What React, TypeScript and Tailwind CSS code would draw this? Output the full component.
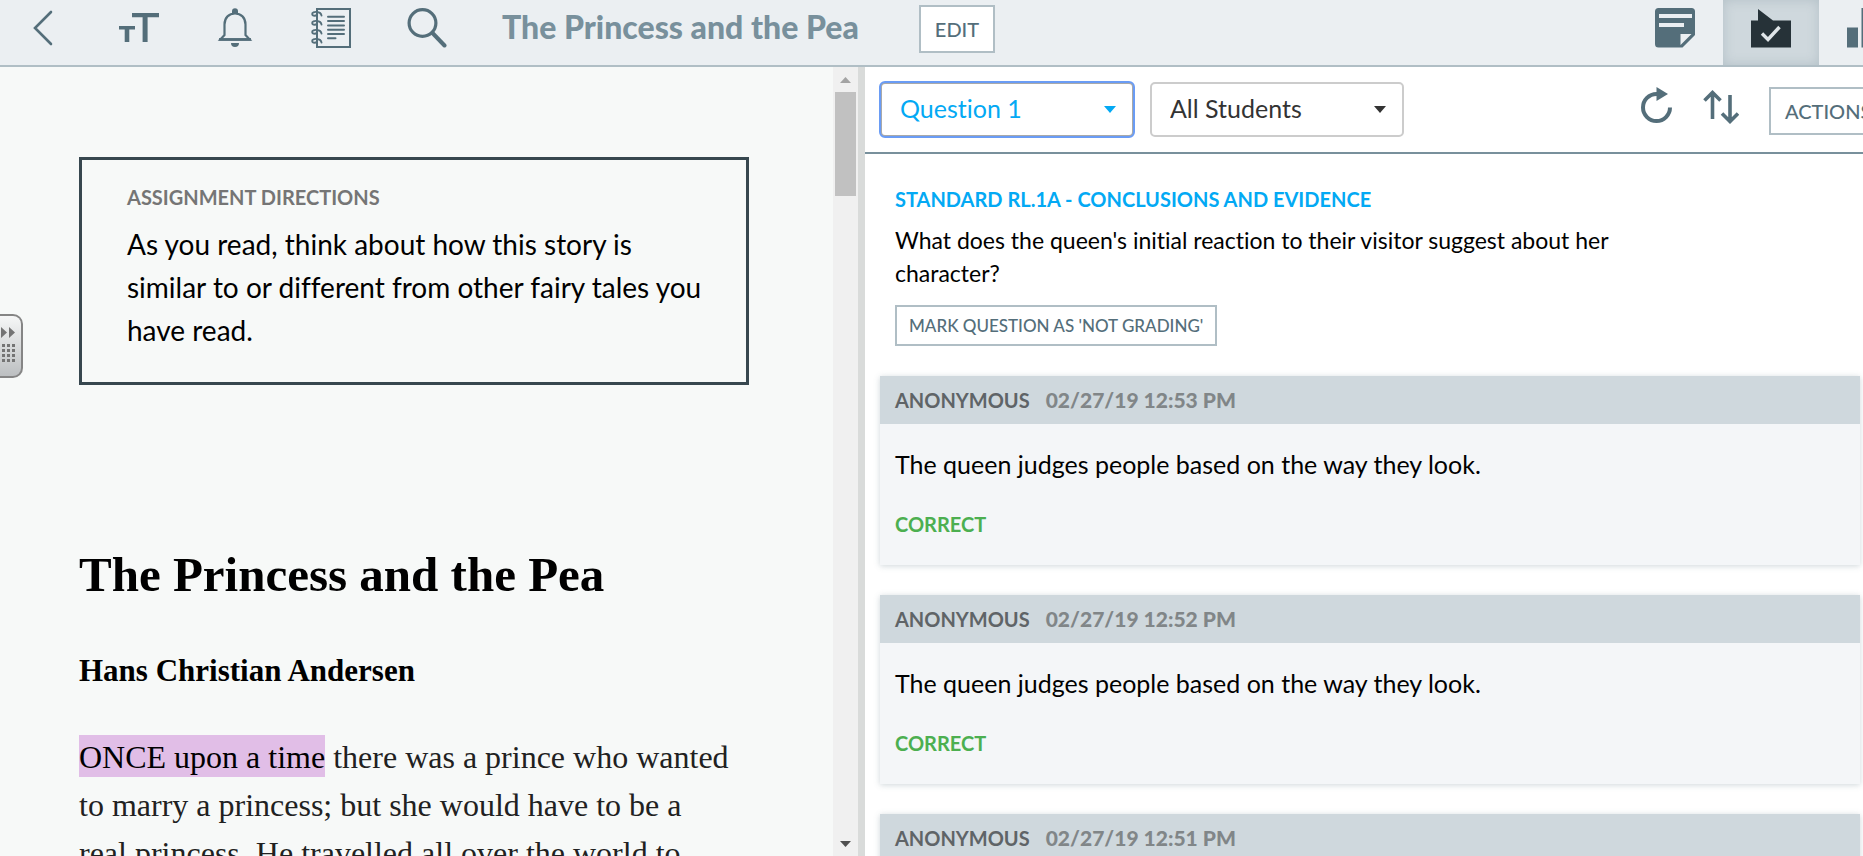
import React from "react";

const responses = [
  { id: 1, name: "ANONYMOUS", date: "02/27/19 12:53 PM", answer: "The queen judges people based on the way they look.", status: "CORRECT" },
  { id: 2, name: "ANONYMOUS", date: "02/27/19 12:52 PM", answer: "The queen judges people based on the way they look.", status: "CORRECT" },
  { id: 3, name: "ANONYMOUS", date: "02/27/19 12:51 PM", answer: "The queen judges people based on the way they look.", status: "CORRECT" },
];

function IconButton({ label, active = false, children }: { label: string; active?: boolean; children: React.ReactNode }) {
  return (
    <button
      type="button"
      aria-label={label}
      className={
        active
          ? "flex h-full w-24 shrink-0 items-center justify-center bg-[#cfd8dd] pb-[9px] text-[#263238] shadow-[inset_0_0_12px_rgba(84,110,122,0.22)]"
          : "flex h-full w-24 shrink-0 items-center justify-center pb-[9px] text-[#546e7a]"
      }
    >
      {children}
    </button>
  );
}

function BackIcon() {
  return (
    <svg width="40" height="40" viewBox="0 0 40 40" fill="none" stroke="currentColor" strokeWidth="2.6">
      <path d="M28 4 12 20l16 16" strokeLinecap="round" />
    </svg>
  );
}

function TextSizeIcon() {
  return (
    <svg width="40" height="40" viewBox="0 0 40 40" fill="currentColor">
      <path d="M13 5h27v4.2H28.6V34h-5V9.200H13z" />
      <path d="M0 18h16v3.600h-5.700V34H5.700V21.600H0z" />
    </svg>
  );
}

function BellIcon() {
  return (
    <svg width="40" height="40" viewBox="0 0 40 40" fill="none" stroke="currentColor" strokeWidth="2.200">
      <path d="M9.500 27V16.500C9.500 9.500 14 5.500 20 5.500s10.500 4 10.500 11V27l4.300 4.600H5.200z" />
      <path d="M4 31.400h32" strokeWidth="2.600" />
      <path d="M17 5V3.200a3 3 0 0 1 6 0V5l1.200 1h-8.400zM16 35h8a4 4 0 0 1-8 0z" fill="currentColor" stroke="none" />
    </svg>
  );
}

function NotebookIcon() {
  return (
    <svg width="40" height="40" viewBox="0 0 40 40" fill="none" stroke="currentColor" strokeWidth="2">
      <path d="M6 1h33v38H6z" />
      <path d="M17 8.700h16M17 13h16M17 17.400h16M17 21.700h16M17 26h16M17 30.300h7.500" strokeLinecap="round" />
      {[6, 15, 24, 33].map((y) => (
        <path key={y} d={`M10.500 ${y + 1.500}C10 ${y - 3} 1 ${y - 3} 1.200 ${y}c.2 2.500 4.800 2.300 4.800 0`} strokeWidth="1.900" strokeLinecap="round" />
      ))}
    </svg>
  );
}

function SearchIcon() {
  return (
    <svg width="40" height="40" viewBox="0 0 40 40" fill="none" stroke="currentColor">
      <circle cx="15.500" cy="15" r="13.400" strokeWidth="3.200" />
      <path d="m25.500 25 12 12.500" strokeWidth="4" strokeLinecap="round" />
    </svg>
  );
}

function NoteIcon() {
  return (
    <svg width="40" height="40" viewBox="0 0 40 40" fill="currentColor">
      <path fillRule="evenodd" d="M3.500 0h33A3.500 3.500 0 0 1 40 3.500V27L27.500 39.500h-24A3.500 3.500 0 0 1 0 36V3.500A3.500 3.500 0 0 1 3.500 0zM4 6v4h33V6zm0 9v4h25v-4zm21.500 11v11L36.500 26z" />
    </svg>
  );
}

function GradingIcon() {
  return (
    <svg width="40" height="40" viewBox="0 0 40 40">
      <path d="M0 12.500h7V1l15 11.500h18V39.500H0z" fill="currentColor" />
      <path d="m11 25.500 6 6L28.500 19" fill="none" stroke="#dfe5e8" strokeWidth="3.400" />
    </svg>
  );
}

function ChartIcon() {
  return (
    <svg width="40" height="40" viewBox="0 0 40 40" fill="currentColor">
      <path d="M0 19.500h11V39.500H0zM14.500 0h11v39.500h-11zM29 11h11v28.500H29z" />
    </svg>
  );
}

function RefreshIcon() {
  return (
    <svg width="32" height="36" viewBox="0 0 32 36" fill="none">
      <path d="M29 20.500A13.500 13.500 0 1 1 15.500 7H18" stroke="currentColor" strokeWidth="4" />
      <path d="M15.500 0 27 7 15.500 14z" fill="currentColor" />
    </svg>
  );
}

function SortIcon() {
  return (
    <svg width="36" height="38" viewBox="0 -2 36 38" fill="none" stroke="currentColor" strokeWidth="3.600">
      <path d="M9.500 30V4M1.500 11.500l8-8 8 8M27 6v26M19 24.500l8 8 8-8" />
    </svg>
  );
}

function FilterSelect({ label, value, focused = false }: { label: string; value: string; focused?: boolean }) {
  return (
    <label className={focused ? "relative block text-[#03a9f4]" : "relative block text-[#333333]"}>
      <span className="sr-only">{label}</span>
      <select
        defaultValue={value}
        className={
          focused
            ? "h-[55px] w-[254px] appearance-none rounded-[5px] border-2 border-[#a9a9a9] bg-white pb-[2px] pl-[18px] text-[25px] outline-2 -outline-offset-1 outline-[#6a9cf5]"
            : "h-[55px] w-[254px] appearance-none rounded-[5px] border-2 border-[#cccccc] bg-white pb-[2px] pl-[18px] text-[25px]"
        }
      >
        <option>{value}</option>
      </select>
      <svg className="pointer-events-none absolute top-6 right-[18px]" width="12" height="7" viewBox="0 0 12 7" fill="currentColor">
        <path d="M0 0h12L6 7z" />
      </svg>
    </label>
  );
}

function ResponseCard({ name, date, answer, status }: { name: string; date: string; answer: string; status: string }) {
  return (
    <article className="bg-[#f4f6f8] shadow-[0_1px_6px_rgba(84,110,122,0.28)]">
      <header className="flex h-12 items-center gap-4 bg-[#cfd8dd] px-[15px] font-bold">
        <span className="text-xl text-[#5f6467]">{name}</span>
        <time className="text-[21px] font-black text-[#818688]">{date}</time>
      </header>
      <div className="px-[15px] pt-[22px] pb-6">
        <p className="text-[25px] leading-9 text-black">{answer}</p>
        <p className="mt-[26px] text-xl leading-[33px] font-bold text-[#4caf50]">{status}</p>
      </div>
    </article>
  );
}

function SideHandle() {
  return (
    <button
      type="button"
      aria-label="Open tools"
      className="absolute top-[314px] left-0 flex h-16 w-[23px] items-center rounded-r-[10px] border-2 border-l-0 border-[#858585] bg-linear-to-b from-[#f6f7f7] to-[#bcbfc1]"
    >
      <svg width="17" height="40" viewBox="0 0 17 40" fill="#747474">
        <path d="M1 1v11l6-5.500zM9 1v11l6-5.500z" />
        {[18, 23, 28, 33].map((y) => (
          <path key={y} d={`M2 ${y}h3v3h-3zM7 ${y}h3v3h-3zM12 ${y}h3v3h-3z`} />
        ))}
      </svg>
    </button>
  );
}

export default function App() {
  return (
    <div className="relative flex h-screen flex-col overflow-hidden bg-white font-['Lato',sans-serif] [font-variant-ligatures:no-common-ligatures]">
      <header className="flex h-[67px] shrink-0 items-center border-b-2 border-[#b0bec5] bg-[#ebeff2]">
        <nav className="-ml-[5px] flex h-full shrink-0" aria-label="Reading tools">
          <IconButton label="Back"><BackIcon /></IconButton>
          <IconButton label="Text size"><TextSizeIcon /></IconButton>
          <IconButton label="Notifications"><BellIcon /></IconButton>
          <IconButton label="Notebook"><NotebookIcon /></IconButton>
          <IconButton label="Search"><SearchIcon /></IconButton>
        </nav>
        <div className="ml-[27px] flex items-center gap-[60px] pb-2">
          <h1 className="pb-1 text-[32px] leading-10 font-black whitespace-nowrap text-[#78909c]">The Princess and the Pea</h1>
          <button type="button" className="h-12 border-2 border-[#b0bec5] bg-white px-[14px] text-xl font-medium text-[#546e7a]">EDIT</button>
        </div>
        <nav className="-mr-[52px] ml-auto flex h-full shrink-0" aria-label="Panels">
          <IconButton label="Notes"><NoteIcon /></IconButton>
          <IconButton label="Grading" active><GradingIcon /></IconButton>
          <IconButton label="Reports"><ChartIcon /></IconButton>
        </nav>
      </header>

      <div className="flex min-h-0 flex-1">
        <main className="flex w-[calc(46%+1px)] shrink-0 bg-[#f7f9f8]">
          <div className="min-w-0 flex-1 overflow-hidden pt-[90px] pr-[84px] pl-[79px]">
            <section className="border-3 border-[#37474f] pt-[23px] pr-9 pb-[30px] pl-[45px]">
              <h2 className="text-xl leading-7 font-bold text-[#757575]">ASSIGNMENT DIRECTIONS</h2>
              <p className="mt-3 text-[28px] leading-[43px] text-black">
                As you read, think about how this story is similar to or different from other fairy tales you have read.
              </p>
            </section>
            <article className="pt-[158px] font-['Liberation_Serif',serif] text-black">
              <h2 className="text-[49px] leading-[64px] font-bold">The Princess and the Pea</h2>
              <h3 className="mt-[43px] text-[31px] leading-[42px] font-bold">Hans Christian Andersen</h3>
              <p className="mt-[41px] pr-4 text-[32px] leading-[48px] text-[#212121]">
                <mark className="bg-[#e1bee7] pt-1 pb-[2px] text-black">ONCE upon a time</mark> there was a prince who wanted to marry a princess; but she would have to be a real princess. He travelled all over the world to find one.
              </p>
            </article>
          </div>
          <div className="flex w-[25px] shrink-0 flex-col items-center bg-[#f0f0f0]" aria-hidden="true">
            <svg width="25" height="25" viewBox="0 0 25 25" fill="#a3a3a3"><path d="m12.500 10 5.500 6H7z" /></svg>
            <div className="h-[104px] w-[21px] bg-[#c1c1c1]" />
            <svg className="mt-auto" width="25" height="25" viewBox="0 0 25 25" fill="#505050"><path d="M7 10h11l-5.500 6z" /></svg>
          </div>
        </main>
        <div className="w-[7px] shrink-0 bg-[#d9dbda]" />

        <section className="flex min-w-0 flex-1 flex-col overflow-hidden">
          <div className="flex h-[87px] shrink-0 items-center gap-4 border-b-2 border-[#78909c] pl-[15px]">
            <FilterSelect label="Question" value="Question 1" focused />
            <FilterSelect label="Students" value="All Students" />
            <div className="-mr-[38px] ml-auto flex items-start gap-[30px] pt-[2px] text-[#546e7a]">
              <button type="button" aria-label="Refresh"><RefreshIcon /></button>
              <button type="button" aria-label="Sort"><SortIcon /></button>
              <button type="button" className="h-12 w-[132px] border-2 border-[#b0bec5] bg-white px-[14px] text-left text-xl font-medium">ACTIONS</button>
            </div>
          </div>

          <div className="min-h-0 flex-1 overflow-hidden pt-[31px] pr-[3px] pl-[15px]">
            <div className="px-[15px]">
              <h2 className="text-xl leading-7 font-bold text-[#03a9f4]">STANDARD RL.1A - CONCLUSIONS AND EVIDENCE</h2>
              <p className="mt-[11px] max-w-[760px] text-[23px] leading-[33px] text-black">
                What does the queen's initial reaction to their visitor suggest about her character?
              </p>
              <button type="button" className="mt-[15px] h-[41px] border-2 border-[#b0bec5] bg-white px-3 text-[17px] font-medium text-[#546e7a]">MARK QUESTION AS 'NOT GRADING'</button>
            </div>
            <div className="mt-[30px] flex flex-col gap-[30px]">
              {responses.map((r) => (
                <ResponseCard key={r.id} name={r.name} date={r.date} answer={r.answer} status={r.status} />
              ))}
            </div>
          </div>
        </section>
      </div>
      <SideHandle />
    </div>
  );
}
